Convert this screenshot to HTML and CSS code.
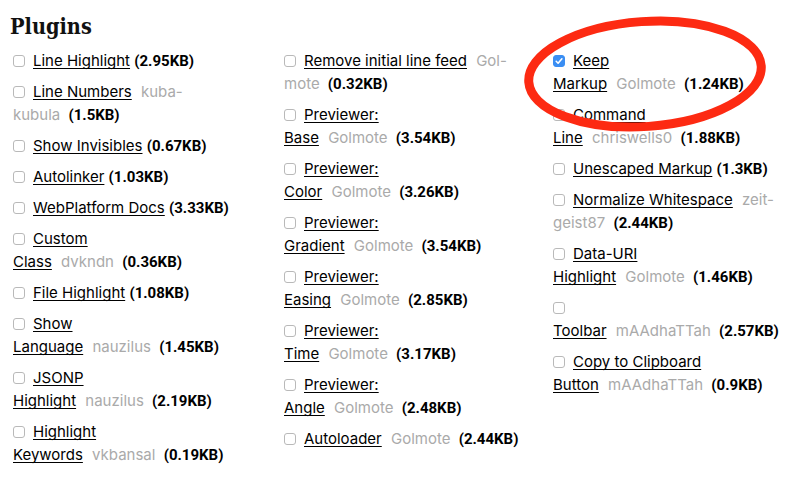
FILE: index.html
```html
<!DOCTYPE html>
<html>
<head>
<meta charset="utf-8">
<title>Plugins</title>
<link rel="stylesheet" href="styles.css">
</head>
<body>
<section class="plugins">
  <h2 class="title">Plugins</h2>
  <div class="cols">
    <ul class="col">
      <li class="item"><span class="box"></span><a class="name" href="#">Line Highlight</a> <strong class="size">(2.95KB)</strong></li>
      <li class="item"><span class="box"></span><a class="name" href="#">Line Numbers</a> <span class="owner">kuba-<br>kubula</span> <strong class="size">(1.5KB)</strong></li>
      <li class="item"><span class="box"></span><a class="name" href="#">Show Invisibles</a> <strong class="size">(0.67KB)</strong></li>
      <li class="item"><span class="box"></span><a class="name" href="#">Autolinker</a> <strong class="size">(1.03KB)</strong></li>
      <li class="item"><span class="box"></span><a class="name" href="#">WebPlatform Docs</a> <strong class="size">(3.33KB)</strong></li>
      <li class="item"><span class="box"></span><a class="name" href="#">Custom<br>Class</a> <span class="owner">dvkndn</span> <strong class="size">(0.36KB)</strong></li>
      <li class="item"><span class="box"></span><a class="name" href="#">File Highlight</a> <strong class="size">(1.08KB)</strong></li>
      <li class="item"><span class="box"></span><a class="name" href="#">Show<br>Language</a> <span class="owner">nauzilus</span> <strong class="size">(1.45KB)</strong></li>
      <li class="item"><span class="box"></span><a class="name" href="#">JSONP<br>Highlight</a> <span class="owner">nauzilus</span> <strong class="size">(2.19KB)</strong></li>
      <li class="item"><span class="box"></span><a class="name" href="#">Highlight<br>Keywords</a> <span class="owner">vkbansal</span> <strong class="size">(0.19KB)</strong></li>
    </ul>
    <ul class="col">
      <li class="item"><span class="box"></span><a class="name" href="#">Remove initial line feed</a> <span class="owner">Gol-<br>mote</span> <strong class="size">(0.32KB)</strong></li>
      <li class="item"><span class="box"></span><a class="name" href="#">Previewer:<br>Base</a> <span class="owner">Golmote</span> <strong class="size">(3.54KB)</strong></li>
      <li class="item"><span class="box"></span><a class="name" href="#">Previewer:<br>Color</a> <span class="owner">Golmote</span> <strong class="size">(3.26KB)</strong></li>
      <li class="item"><span class="box"></span><a class="name" href="#">Previewer:<br>Gradient</a> <span class="owner">Golmote</span> <strong class="size">(3.54KB)</strong></li>
      <li class="item"><span class="box"></span><a class="name" href="#">Previewer:<br>Easing</a> <span class="owner">Golmote</span> <strong class="size">(2.85KB)</strong></li>
      <li class="item"><span class="box"></span><a class="name" href="#">Previewer:<br>Time</a> <span class="owner">Golmote</span> <strong class="size">(3.17KB)</strong></li>
      <li class="item"><span class="box"></span><a class="name" href="#">Previewer:<br>Angle</a> <span class="owner">Golmote</span> <strong class="size">(2.48KB)</strong></li>
      <li class="item"><span class="box"></span><a class="name" href="#">Autoloader</a> <span class="owner">Golmote</span> <strong class="size">(2.44KB)</strong></li>
    </ul>
    <ul class="col">
      <li class="item"><span class="box checked"><svg viewBox="0 0 12 12" width="12" height="12"><path d="M3.2 6.3 L5.1 8.2 L8.9 3.8" fill="none" stroke="#fff" stroke-width="1.6" stroke-linecap="round" stroke-linejoin="round"/></svg></span><a class="name" href="#">Keep<br>Markup</a> <span class="owner">Golmote</span> <strong class="size">(1.24KB)</strong></li>
      <li class="item"><span class="box"></span><a class="name" href="#">Command<br>Line</a> <span class="owner">chriswells0</span> <strong class="size">(1.88KB)</strong></li>
      <li class="item"><span class="box"></span><a class="name" href="#">Unescaped Markup</a> <strong class="size">(1.3KB)</strong></li>
      <li class="item"><span class="box"></span><a class="name" href="#">Normalize Whitespace</a> <span class="owner">zeit-<br>geist87</span> <strong class="size">(2.44KB)</strong></li>
      <li class="item"><span class="box"></span><a class="name" href="#">Data-URI<br>Highlight</a> <span class="owner">Golmote</span> <strong class="size">(1.46KB)</strong></li>
      <li class="item"><span class="box"></span><br><a class="name" href="#">Toolbar</a> <span class="owner">mAAdhaTTah</span> <strong class="size">(2.57KB)</strong></li>
      <li class="item"><span class="box"></span><a class="name" href="#">Copy to Clipboard<br>Button</a> <span class="owner">mAAdhaTTah</span> <strong class="size">(0.9KB)</strong></li>
    </ul>
  </div>
  <svg class="mark" viewBox="0 0 260 130" width="260" height="130" aria-hidden="true">
    <ellipse cx="130" cy="65" rx="116.5" ry="52.5" fill="none" stroke="#fd2a12" stroke-width="9" transform="rotate(-4 130 65)"/>
  </svg>
</section>
</body>
</html>
```
FILE: styles.css
```css
html, body {
  margin: 0;
  padding: 0;
  background: #fff;
}

body {
  font-family: Inter, "Open Sans", sans-serif;
  font-size: 15px;
  color: #000;
}

.plugins {
  position: relative;
  padding: 15px 0 0 13px;
}

.title {
  font-family: "DejaVu Serif Condensed", "DejaVu Serif", serif;
  font-weight: bold;
  font-size: 21.5px;
  line-height: 24px;
  margin: 0 0 10px -3px;
  color: #111;
}

.cols {
  display: grid;
  grid-template-columns: 271px 269px 1fr;
}

.col {
  list-style: none;
  margin: 0;
  padding: 0;
}

.item {
  line-height: 23px;
  margin: 0 0 8px;
}

.box {
  display: inline-block;
  box-sizing: border-box;
  width: 12px;
  height: 12px;
  border: 1px solid #b9b9b9;
  border-radius: 3px;
  background: #fff;
  margin-right: 8px;
  vertical-align: -1px;
  position: relative;
}

.box.checked {
  background: #3a8ef3;
  border-color: #3a8ef3;
}

.box svg {
  position: absolute;
  left: -1px;
  top: -1px;
}

.name {
  color: #000;
  text-decoration: underline;
  text-decoration-thickness: 1px;
  text-underline-offset: 2px;
  text-decoration-skip-ink: none;
}

.owner {
  color: #aaa;
  padding: 0 4px 0 5px;
}

.size {
  font-family: Roboto, Inter, sans-serif;
  font-weight: 700;
  line-height: 16px;
  color: #000;
}

.mark {
  position: absolute;
  left: 515px;
  top: 9px;
  pointer-events: none;
}
```
